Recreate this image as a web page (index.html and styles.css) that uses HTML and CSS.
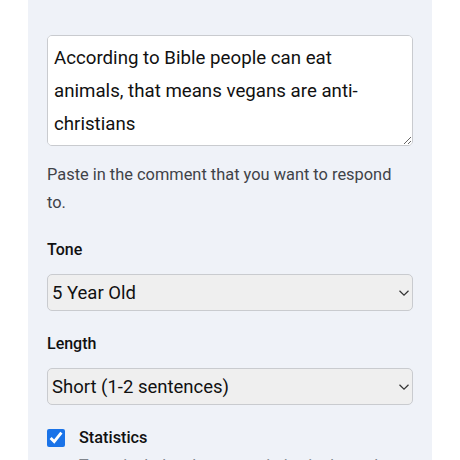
FILE: index.html
```html
<!DOCTYPE html>
<html>
<head>
<meta charset="utf-8">
<link rel="stylesheet" href="styles.css">
</head>
<body>
<div class="panel">
  <textarea class="comment">According to Bible people can eat animals, that means vegans are anti-christians</textarea>
  <p class="help">Paste in the comment that you want to respond to.</p>

  <div class="label">Tone</div>
  <div class="select-wrap">
    <select class="select"><option>5 Year Old</option></select>
    <svg class="chev" width="12" height="8" viewBox="0 0 12 8"><path d="M1.5 1.8 L6 6.2 L10.5 1.8" fill="none" stroke="#333" stroke-width="1.2"/></svg>
  </div>

  <div class="label">Length</div>
  <div class="select-wrap">
    <select class="select"><option>Short (1-2 sentences)</option></select>
    <svg class="chev" width="12" height="8" viewBox="0 0 12 8"><path d="M1.5 1.8 L6 6.2 L10.5 1.8" fill="none" stroke="#333" stroke-width="1.2"/></svg>
  </div>

  <div class="check-row">
    <input type="checkbox" class="check" checked>
    <div class="check-text">
      <div class="check-label">Statistics</div>
      <div class="check-desc">Try to include relevant statistics in the reply.</div>
    </div>
  </div>
</div>
</body>
</html>
```
FILE: styles.css
```css
html, body {
  margin: 0;
  padding: 0;
  background: #ffffff;
  height: 460px;
  overflow: hidden;
}
body {
  font-family: Roboto, "Noto Sans", "Liberation Sans", sans-serif;
  color: #111;
}
.panel {
  width: 404px;
  margin-left: 28px;
  height: 460px;
  overflow: hidden;
  background: #eff2f8;
  box-sizing: border-box;
  padding: 35px 19px 0 19px;
  display: flex;
  flex-direction: column;
}
.comment {
  display: block;
  flex: none;
  width: 366px;
  height: 111px;
  box-sizing: border-box;
  border: 1px solid #c9cbcf;
  border-radius: 5px;
  background: #fff;
  font-family: Roboto, "Noto Sans", sans-serif;
  font-size: 18.7px;
  line-height: 33px;
  color: #111;
  padding: 6px 30px 6px 6px;
  margin: 0;
}
.help {
  margin: 15px 0 0 0;
  max-width: 352px;
  font-size: 16.4px;
  line-height: 28px;
  color: #3f4348;
}
.label {
  margin-top: 21px;
  font-size: 16px;
  line-height: 24px;
  font-weight: 500;
  color: #111;
}
.select-wrap {
  position: relative;
  flex: none;
  margin-top: 12px;
  width: 366px;
}
.select {
  -webkit-appearance: none;
  appearance: none;
  display: block;
  width: 366px;
  height: 37px;
  box-sizing: border-box;
  border: 1px solid #c9cbcf;
  border-radius: 5px;
  background: #efefef;
  font-family: Roboto, "Noto Sans", sans-serif;
  font-size: 18.5px;
  color: #111;
  padding: 0 4px;
  margin: 0;
}
.chev {
  position: absolute;
  right: 3px;
  top: 15px;
}
.check-row {
  flex: none;
  margin-top: 21px;
  display: flex;
  align-items: flex-start;
  gap: 14px;
}
.check {
  width: 18px;
  height: 18px;
  margin: 3px 0 0 0;
  accent-color: #1a73e8;
}
.check-text {
  display: flex;
  flex-direction: column;
}
.check-label {
  font-size: 16.3px;
  line-height: 24px;
  font-weight: 500;
  color: #111;
}
.check-desc {
  margin-top: 4px;
  font-size: 16px;
  line-height: 24px;
  color: #80858c;
}
```
